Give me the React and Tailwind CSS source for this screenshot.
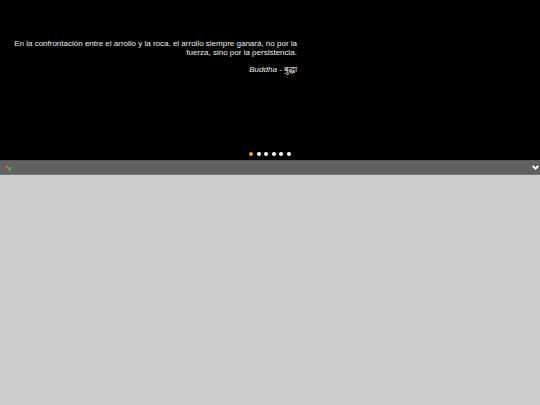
import { useState } from "react";

const quotes = [0, 1, 2, 3, 4, 5];

function Dots() {
  const [active, setActive] = useState(0);
  return (
    <nav aria-label="Citas" className="mx-auto flex w-[42px] justify-between">
      {quotes.map((n) => (
        <button
          key={n}
          type="button"
          aria-label={`Cita ${n + 1}`}
          onClick={() => setActive(n)}
          className={`size-1 rounded-full ${n === active ? "bg-[#eba42c]" : "bg-white"}`}
        />
      ))}
    </nav>
  );
}

function Logo() {
  return (
    <svg viewBox="0 0 8 8" className="size-2" fill="none" aria-hidden="true">
      <path d="M1 2h1.5M2.5 1.5v3M3.5 1v1.5" stroke="#d2564e" strokeWidth="1" />
      <path d="M4.5 3v2.5h2V3M6.5 5v2H5" stroke="#55b84e" strokeWidth="1" />
      <path d="M2 3.8h1" stroke="#d9a08e" strokeWidth="1" />
    </svg>
  );
}

export default function App() {
  return (
    <div className="flex min-h-screen flex-col bg-[#cccccc] font-['Liberation_Sans','Noto_Sans',sans-serif]">
      <header className="flex h-40 flex-col justify-between bg-black pt-[39px] pb-1 text-[#eeeeee]">
        <blockquote className="ml-2 w-[289px] text-right text-[8px] leading-[9px]">
          <p>
            En la confrontación entre el arrollo y la roca, el arrollo siempre ganará, no por la{" "}
            <br />
            fuerza, sino por la persistencia.
          </p>
          <cite className="mt-2 block">Buddha - बुद्धा</cite>
        </blockquote>
        <Dots />
      </header>
      <div className="flex h-[15px] items-center justify-between border-y border-t-[#555555] border-b-[#777777] bg-[#606060] pr-px pl-1">
        <a href="#inicio" aria-label="Inicio">
          <Logo />
        </a>
        <button type="button" aria-label="Abrir menú">
          <svg viewBox="0 0 6 6" className="size-[7px]" fill="none" aria-hidden="true">
            <path d="M0.6 1.6 3 4 5.4 1.6" stroke="#ffffff" strokeWidth="1.6" />
          </svg>
        </button>
      </div>
      <main className="flex-1" />
    </div>
  );
}
